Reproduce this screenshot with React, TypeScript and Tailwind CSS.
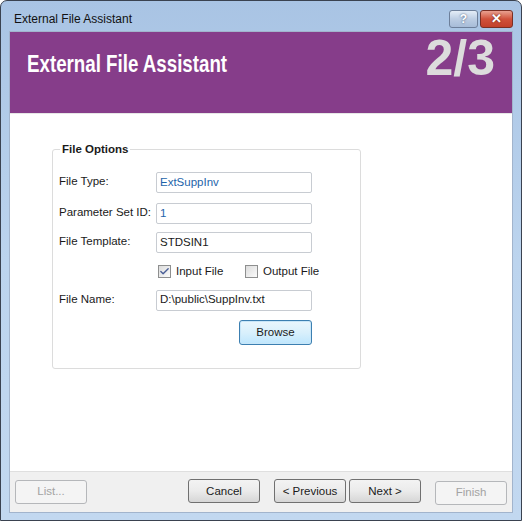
import { Check } from "lucide-react";

const ui = "font-['Segoe_UI','Liberation_Sans',sans-serif]";

function TextBox({ value, blue }: { value: string; blue?: boolean }) {
  return (
    <div
      className={`flex h-[21px] w-[156px] items-center rounded-[2px] border border-[#c8ccd2] bg-white px-[3px] text-[11.5px] ${
        blue ? "text-[#1e64aa]" : "text-[#1a1a1a]"
      }`}
    >
      {value}
    </div>
  );
}

function CheckBox({ label, checked }: { label: string; checked?: boolean }) {
  return (
    <div className="flex items-center gap-[5px] text-[11.5px] text-[#1a1a1a]">
      <div className="flex h-[13px] w-[13px] items-center justify-center border border-[#8e8f8f] bg-gradient-to-br from-[#dcdcdc] to-[#fbfbfb]">
        {checked && <Check className="h-[11px] w-[11px] text-[#4a5f97]" strokeWidth={3} />}
      </div>
      <span>{label}</span>
    </div>
  );
}

function Row({ label, children }: { label: string; children: React.ReactNode }) {
  return (
    <div className="flex items-start">
      <div className="w-[97px] pt-[1px] text-[11.5px] text-[#1a1a1a]">{label}</div>
      {children}
    </div>
  );
}

function FooterButton({ label, disabled }: { label: string; disabled?: boolean }) {
  return (
    <button
      className={`h-[24px] w-[72px] rounded-[3px] border text-[11.5px] ${
        disabled
          ? "border-[#b5b7ba] bg-[#f4f4f4] text-[#a3a3a3]"
          : "border-[#707070] bg-gradient-to-b from-[#f3f3f3] via-[#ebebeb] to-[#d6d6d6] text-[#1a1a1a]"
      }`}
    >
      {label}
    </button>
  );
}

export default function App() {
  return (
    <div className={`h-[523px] w-[523px] bg-white ${ui}`}>
      <div className="flex h-[521px] w-[522px] flex-col rounded-t-[7px] border border-[#3a4250] bg-gradient-to-b from-[#a9c4e4] via-[#bcd4ee] to-[#c2d8f0] px-[8px] pb-[7px]">
        {/* title bar */}
        <div className="flex h-[30px] items-center justify-between">
          <span className="pl-[5px] pt-[6px] text-[12px] text-[#111]">External File Assistant</span>
          <div className="flex gap-[2px] pt-[6px]">
            <div className="flex h-[18px] w-[29px] items-center justify-center rounded-[3px] border border-[#6d7f9a] bg-gradient-to-b from-[#e4edf7] via-[#bccde3] to-[#a7bcd8] text-[12px] font-bold text-white [text-shadow:0_0_2px_#3a4a66]">
              ?
            </div>
            <div className="flex h-[18px] w-[33px] items-center justify-center rounded-[3px] border border-[#7a2f24] bg-gradient-to-b from-[#e8a090] via-[#d0513b] to-[#c2402a] text-[13px] font-bold text-white [text-shadow:0_0_2px_#5a1a10]">
              ✕
            </div>
          </div>
        </div>

        <div className="flex flex-1 flex-col border border-[#a2b4cc] bg-white">
          {/* purple banner */}
          <div className="flex h-[81px] items-start justify-between bg-[#863d8a] pl-[17px] pr-[17px]">
            <div className="origin-left scale-x-[0.78] pt-[20px] font-['Liberation_Sans',sans-serif] text-[24px] font-bold leading-none whitespace-nowrap text-white">
              External File Assistant
            </div>
            <div className="pt-[1px] font-['Liberation_Sans','Arial',sans-serif] text-[50px] font-bold leading-none text-[#dcdcdc]">
              2/3
            </div>
          </div>

          {/* content */}
          <div className="flex-1 border-t border-[#e6e6e6] pl-[42px] pt-[27px]">
            <fieldset className="w-[309px] rounded-[3px] border border-[#dcdcdc] pb-[23px] pl-[6px]">
              <legend className="ml-[1px] px-[2px] text-[11.5px] font-bold text-[#1a1a1a]">File Options</legend>
              <div className="flex flex-col">
                <div className="mt-[14px]">
                  <Row label="File Type:">
                    <TextBox value="ExtSuppInv" blue />
                  </Row>
                </div>
                <div className="mt-[10px]">
                  <Row label="Parameter Set ID:">
                    <TextBox value="1" blue />
                  </Row>
                </div>
                <div className="mt-[8px]">
                  <Row label="File Template:">
                    <TextBox value="STDSIN1" />
                  </Row>
                </div>
                <div className="mt-[10px] flex pl-[99px]">
                  <div className="w-[87px]">
                    <CheckBox label="Input File" checked />
                  </div>
                  <CheckBox label="Output File" />
                </div>
                <div className="mt-[9px]">
                  <Row label="File Name:">
                    <TextBox value="D:\public\SuppInv.txt" />
                  </Row>
                </div>
                <div className="mt-[8px] pl-[180px]">
                  <button className="h-[25px] w-[73px] rounded-[3px] border border-[#3c7fb1] bg-gradient-to-b from-[#eaf6fd] via-[#d9f0fc] to-[#bee6fd] text-[11.5px] text-[#1a1a1a] shadow-[inset_0_0_0_1px_#c8e6f8]">
                    Browse
                  </button>
                </div>
              </div>
            </fieldset>
          </div>

          {/* footer */}
          <div className="flex h-[41px] items-center border-t border-[#dfdfdf] bg-[#f0f0f0] pl-[5px] pr-[5px]">
            <FooterButton label="List..." disabled />
            <div className="ml-auto flex">
              <FooterButton label="Cancel" />
              <div className="ml-[14px] flex gap-[3px]">
                <FooterButton label="< Previous" />
                <FooterButton label="Next >" />
              </div>
              <div className="ml-[14px]">
                <FooterButton label="Finish" disabled />
              </div>
            </div>
          </div>
        </div>
      </div>
    </div>
  );
}
